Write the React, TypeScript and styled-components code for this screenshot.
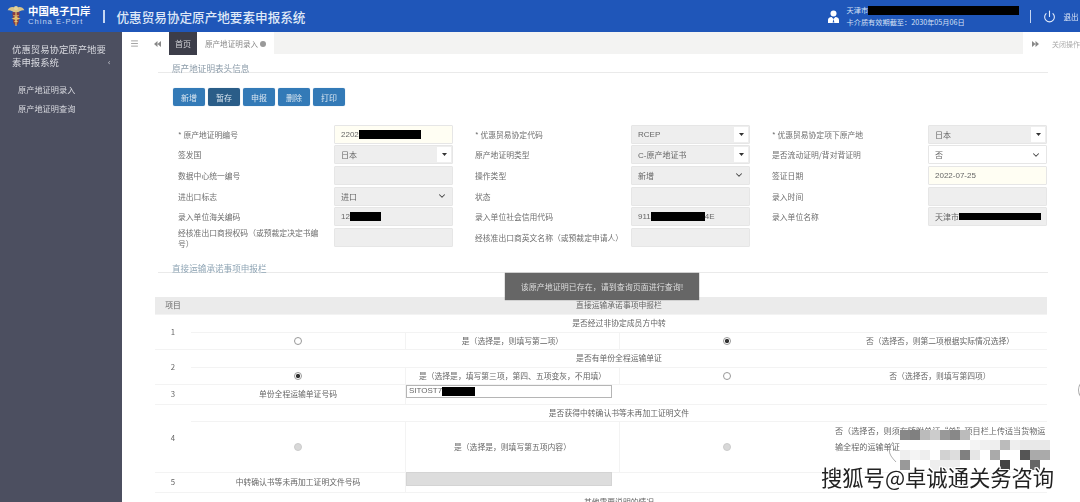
import React from "react";
import styled, { createGlobalStyle } from "styled-components";
import { Menu, Power, ChevronDown } from "lucide-react";

const Global = createGlobalStyle`
  html, body { margin: 0; padding: 0; background: #fff; }
  #root { width: 1080px; height: 502px; overflow: hidden; position: relative; }
  * { box-sizing: border-box; }
`;

const FONT = `"Noto Sans CJK SC", "Liberation Sans", sans-serif`;

const Page = styled.div`
  width: 1080px; height: 502px; overflow: hidden; display: flex; flex-direction: column;
  font-family: ${FONT}; font-size: 8px; color: #666; filter: blur(0.45px);
`;
const Header = styled.header`
  height: 32px; flex: none; background: #1f56b9; display: flex; align-items: center; color: #fff;
`;
const LogoBox = styled.div`width: 28px; flex: none; padding-left: 7px; display: flex; align-items: center;`;
const LogoText = styled.div`width: 75px; flex: none; display: flex; flex-direction: column; line-height: 10px;`;
const LogoCn = styled.div`font-size: 10.4px; font-weight: 700; line-height: 12px;`;
const LogoEn = styled.div`font-family: "Liberation Sans", sans-serif; font-size: 7.6px; letter-spacing: 1px; color: #c5d5f0;`;
const HeaderBar = styled.div`width: 1.5px; height: 13px; flex: none; background: #c5d6f2;`;
const SystemTitle = styled.div`
  font-size: 12.6px; font-weight: 500; color: #dfe8f7; width: 711px; flex: none; margin-left: 12px; white-space: nowrap;
`;
const HeadUser = styled.div`width: 14px; flex: none; display: flex;`;
const UserBlock = styled.div`
  width: 183px; flex: none; display: flex; flex-direction: column; font-size: 7.2px; color: #d4e0f5; line-height: 12px; margin-left: 5px;
`;
const UserLine = styled.div`display: flex; align-items: center; white-space: nowrap;`;
const PowerWrap = styled.div`display: flex; flex: none; margin: 0 8px 0 11.5px; color: #e4ecfa;`;
const Exit = styled.div`font-size: 7.5px; color: #dfe8f7; white-space: nowrap; flex: none;`;
const Redact = styled.span<{ $w: number; $h?: number }>`
  display: inline-block; width: ${(p) => p.$w}px; height: ${(p) => p.$h ?? 9}px; background: #000; flex: none;
  vertical-align: middle;
`;

const Body = styled.div`flex: 1; display: flex; min-height: 0;`;
const Sidebar = styled.aside`
  width: 122px; flex: none; background: #4c4f60; color: #d9dae0; padding: 11px 0 0 12px;
`;
const SideTitleRow = styled.div`display: flex; align-items: flex-end;`;
const SideTitle = styled.div`width: 95px; flex: none; font-size: 9.4px; line-height: 13px;`;
const SideArrow = styled.span`font-size: 8px; margin: 0 0 3px 1px; line-height: 8px;`;
const SideList = styled.div`padding: 14px 0 0 6px; display: flex; flex-direction: column; gap: 6px;`;
const SideItem = styled.div`font-size: 8.2px; line-height: 13px;`;

const Main = styled.main`flex: 1; min-width: 0; display: flex; flex-direction: column; position: relative;`;
const TabBar = styled.div`height: 23px; flex: none; display: flex; align-items: stretch;`;
const TabIcon = styled.div<{ $w: number }>`
  width: ${(p) => p.$w}px; flex: none; display: flex; align-items: center; justify-content: center; color: #888;
`;
const TabActive = styled.div`
  width: 28px; flex: none; background: #3c3d49; color: #d5d5da; font-size: 8px; display: flex; align-items: center; justify-content: center;
`;
const Tab = styled.div`
  width: 77px; flex: none; color: #888; font-size: 7.6px; display: flex; align-items: center; justify-content: center; gap: 2px;
`;
const TabClose = styled.span`width: 6px; height: 6px; border-radius: 50%; background: #999; flex: none;`;
const TabFill = styled.div`width: 749px; flex: none; background: #f3f3f2; margin-bottom: 1px;`;
const TabRight = styled.div`color: #aaa; font-size: 7px; display: flex; align-items: center; white-space: nowrap; padding-left: 9px; gap: 13px;`;
const ArrowSvg = styled.svg<{ $flip?: boolean }>`
  flex: none; ${(p) => p.$flip && "transform: scaleX(-1);"}
`;

const Content = styled.div`padding: 0 32px 0 36px; flex: 1;`;
const SectionTitle = styled.div<{ $h: number; $top: number; $c: string }>`
  height: ${(p) => p.$h}px; padding: ${(p) => p.$top}px 0 0 14px; border-bottom: 1px solid #eaeaea; font-size: 8.6px;
  color: ${(p) => p.$c}; line-height: 10px;
`;
const Toolbar = styled.div`display: flex; gap: 3px; margin: 15px 0 0 15px;`;
const Btn = styled.button<{ $dark?: boolean }>`
  width: 32px; height: 18px; padding: 0; border: none; border-radius: 2px; font: inherit; font-size: 8px;
  color: #dbe7f1; background: ${(p) => (p.$dark ? "#2a5d88" : "#337ab7")}; box-shadow: 0 0 1px #8fb2d0;
`;
const Form = styled.div`
  margin: 18px 0 0 20px; display: grid; grid-template-columns: repeat(3, 297px); grid-auto-rows: 20.6px;
`;
const Field = styled.div`display: grid; grid-template-columns: 156px 119px; align-items: center;`;
const Label = styled.div<{ $nowrap?: boolean }>`
  font-size: 7.8px; color: #6e6e6e; line-height: 11px; padding-right: 12px;
  ${(p) => p.$nowrap && "white-space: nowrap;"}
`;
const tones: Record<string, string> = { gray: "#eee", yellow: "#fffef3", white: "#fff" };
const Control = styled.div<{ $tone: string }>`
  height: 19px; background: ${(p) => tones[p.$tone]}; border: 1px solid #e6e6e6; border-radius: 1px; padding: 0 6px;
  display: flex; align-items: center; font-family: "Liberation Sans", "Noto Sans CJK SC", sans-serif; font-size: 8px; color: #666;
  white-space: nowrap; overflow: hidden;
`;
const CaretBox = styled.span`
  margin: 0 -5px 0 auto; width: 14px; height: 15px; background: #fff; display: flex; align-items: center; justify-content: center;
  flex: none;
`;
const Chevron = styled.span`margin-left: auto; display: flex; color: #444; margin-right: -1px;`;

const Toast = styled.div`
  position: absolute; left: 383px; top: 241px; width: 194px; height: 27px; background: #666; color: #ddd; font-size: 8px;
  display: flex; align-items: center; justify-content: center; box-shadow: 0 0 1px #555;
`;

const Table = styled.div`
  margin: 24px 0 0 -3px; display: grid; grid-template-columns: 36px repeat(4, 214px);
  grid-template-rows: 18px 18px 17px 18px 17px 20px 17px 51px 20px 20px;
`;
const Cell = styled.div<{ $span?: number; $rows?: number; $head?: boolean; $left?: boolean; $line?: boolean }>`
  ${(p) => p.$span && `grid-column: span ${p.$span};`}
  ${(p) => p.$rows && `grid-row: span ${p.$rows};`}
  display: flex; align-items: center; justify-content: ${(p) => (p.$left ? "flex-start" : "center")};
  background: ${(p) => (p.$head ? "#ebebeb" : "#fff")};
  border-bottom: 1px solid #f3f3f3;
  ${(p) => p.$line && "border-left: 1px solid #f3f3f3;"}
  color: #666; font-size: 7.8px; line-height: 16px; white-space: nowrap;
`;
const WrapText = styled.div`white-space: normal; width: 212px; padding-left: 1px; line-height: 16px; font-size: 8.1px; margin-bottom: 15px;`;
const TextInput = styled.div`
  width: 206px; height: 13px; margin-bottom: 6px; border: 1px solid #b5b5b5; background: #fff; font-family: "Liberation Sans", sans-serif;
  font-size: 8px; display: flex; align-items: center; padding-left: 2px; color: #666;
`;
const GrayInput = styled.div`width: 206px; height: 14px; margin-bottom: 6px; background: #ddd; border: 1px solid #d4d4d4;`;
const Radio = styled.input.attrs({ type: "radio", readOnly: true })`
  appearance: none; width: 8px; height: 8px; margin: 0; border-radius: 50%; background: #fff; border: 1px solid #999;
  &:checked { background: radial-gradient(circle, #333 0 45%, #fff 55%); }
  &:disabled { background: #d8d8d8; border-color: #ccc; }
`;

const EdgeArc = styled.div`
  position: absolute; left: 1078px; top: 380px; width: 16px; height: 20px; border: 1px solid #aaa; border-radius: 50%;
`;
const Mosaic = styled.div`
  position: absolute; left: 900px; top: 430px; display: grid; grid-template-columns: repeat(15, 10px); grid-auto-rows: 10px;
  filter: blur(0.3px);
`;
const Pixel = styled.div<{ $c: string }>`background: ${(p) => p.$c};`;
const Callout = styled.svg`position: absolute; left: 885px; top: 440px;`;
const Watermark = styled.div`
  position: absolute; left: 821px; top: 463px; font-family: ${FONT}; font-size: 21.3px; font-weight: 400; line-height: 28px; color: #222;
  white-space: nowrap; text-shadow: 1px 0 0 #fff, -1px 0 0 #fff, 0 1px 0 #fff, 0 -1px 0 #fff, 1px 1px 0 #fff, -1px -1px 0 #fff, 1px -1px 0 #fff, -1px 1px 0 #fff;
`;

const T = "transparent";
const pixels = [
  "#888", "#808080", "#bbb", "#ccc", "#999", "#888", "#bbb", T, T, T, T, T, T, T, T,
  "#fff", "#fff", "#fff", "#fff", "#fff", "#fff", "#fff", "#f4f4f4", "#f0f0f0", "#eee", "#bbb", "#eee", "#e8e8e8", "#e8e8e8", "#e8e8e8",
  "#eee", "#f4f4f4", "#eee", "#fff", "#d2d2d2", "#ddd", "#808080", "#e6e6e6", "#fff", "#aaa", "#fff", "#fff", "#555", "#aaa", "#aaa",
  "#999", "#fff", "#fff", "#eee", "#eee", "#eee", "#fff", "#fff", "#fff", "#fff", "#444", "#fff", "#fff", "#666", "#fff",
];

const LogoIcon = () => (
  <svg width="18" height="24" viewBox="0 0 17 23">
    <path d="M8.5 4 C5 2 2 3 0.5 6 C3 5.5 5 6.5 6.5 8 L10.5 8 C12 6.5 14 5.5 16.5 6 C15 3 12 2 8.5 4Z" fill="#d8c48a" />
    <circle cx="8.5" cy="4" r="2" fill="#e3d39b" />
    <path d="M5 8 H12 L11 18 Q8.5 23 6 18Z" fill="#8a3b3f" />
    <path d="M8.5 6 V21 M6 11 Q11 12 6 14 Q11 15 7 17 M11 11 Q6 12 11 14 Q6 15 10 17" stroke="#e3c56f" strokeWidth="1.1" fill="none" />
  </svg>
);

const UserIcon = () => (
  <svg width="11" height="13" viewBox="0 0 11 13">
    <circle cx="5.5" cy="3.4" r="3" fill="#fff" />
    <path d="M0 13 V10 Q0 7.4 3.6 7 L5.5 9 L7.4 7 Q11 7.4 11 10 V13Z" fill="#fff" />
    <path d="M5.5 9 L4.6 12.6 H6.4Z" fill="#1f56b9" />
  </svg>
);

const DoubleArrow = ({ flip }: { flip?: boolean }) => (
  <ArrowSvg $flip={flip} width="7" height="6" viewBox="0 0 7 6">
    <path d="M3.5 0 V6 L0 3Z M7 0 V6 L3.5 3Z" fill="#888" />
  </ArrowSvg>
);

const Caret = () => (
  <CaretBox>
    <svg width="5" height="3" viewBox="0 0 5 3">
      <path d="M0 0 H5 L2.5 3Z" fill="#333" />
    </svg>
  </CaretBox>
);
const Chev = () => (
  <Chevron>
    <ChevronDown size={10} strokeWidth={2.5} />
  </Chevron>
);

export default function App() {
  return (
    <>
      <Global />
      <Page>
        <Header>
          <LogoBox>
            <LogoIcon />
          </LogoBox>
          <LogoText>
            <LogoCn>中国电子口岸</LogoCn>
            <LogoEn>China E-Port</LogoEn>
          </LogoText>
          <HeaderBar />
          <SystemTitle>优惠贸易协定原产地要素申报系统</SystemTitle>
          <HeadUser>
            <UserIcon />
          </HeadUser>
          <UserBlock>
            <UserLine>
              天津市<Redact $w={151} />
            </UserLine>
            <UserLine>卡介质有效期截至：2030年05月06日</UserLine>
          </UserBlock>
          <HeaderBar />
          <PowerWrap>
            <Power size={13} strokeWidth={2} />
          </PowerWrap>
          <Exit>退出</Exit>
        </Header>
        <Body>
          <Sidebar>
            <SideTitleRow>
              <SideTitle>优惠贸易协定原产地要素申报系统</SideTitle>
              <SideArrow>‹</SideArrow>
            </SideTitleRow>
            <SideList>
              <SideItem>原产地证明录入</SideItem>
              <SideItem>原产地证明查询</SideItem>
            </SideList>
          </Sidebar>
          <Main>
            <TabBar>
              <TabIcon $w={24}>
                <Menu size={9} />
              </TabIcon>
              <TabIcon $w={23}>
                <DoubleArrow />
              </TabIcon>
              <TabActive>首页</TabActive>
              <Tab>
                原产地证明录入<TabClose />
              </Tab>
              <TabFill />
              <TabRight>
                <DoubleArrow flip />
                <span>关闭操作</span>
              </TabRight>
            </TabBar>
            <Content>
              <SectionTitle $h={18} $top={8} $c="#8a9aa8">
                原产地证明表头信息
              </SectionTitle>
              <Toolbar>
                <Btn>新增</Btn>
                <Btn $dark>暂存</Btn>
                <Btn>申报</Btn>
                <Btn>删除</Btn>
                <Btn>打印</Btn>
              </Toolbar>
              <Form>
                <Field>
                  <Label>* 原产地证明编号</Label>
                  <Control $tone="yellow">
                    2202<Redact $w={62} />
                  </Control>
                </Field>
                <Field>
                  <Label>* 优惠贸易协定代码</Label>
                  <Control $tone="gray">
                    RCEP
                    <Caret />
                  </Control>
                </Field>
                <Field>
                  <Label>* 优惠贸易协定项下原产地</Label>
                  <Control $tone="gray">
                    日本
                    <Caret />
                  </Control>
                </Field>

                <Field>
                  <Label>签发国</Label>
                  <Control $tone="gray">
                    日本
                    <Caret />
                  </Control>
                </Field>
                <Field>
                  <Label>原产地证明类型</Label>
                  <Control $tone="gray">
                    C-原产地证书
                    <Caret />
                  </Control>
                </Field>
                <Field>
                  <Label>是否流动证明/背对背证明</Label>
                  <Control $tone="white">
                    否
                    <Chev />
                  </Control>
                </Field>

                <Field>
                  <Label>数据中心统一编号</Label>
                  <Control $tone="gray" />
                </Field>
                <Field>
                  <Label>操作类型</Label>
                  <Control $tone="gray">
                    新增
                    <Chev />
                  </Control>
                </Field>
                <Field>
                  <Label>签证日期</Label>
                  <Control $tone="yellow">2022-07-25</Control>
                </Field>

                <Field>
                  <Label>进出口标志</Label>
                  <Control $tone="gray">
                    进口
                    <Chev />
                  </Control>
                </Field>
                <Field>
                  <Label>状态</Label>
                  <Control $tone="gray" />
                </Field>
                <Field>
                  <Label>录入时间</Label>
                  <Control $tone="gray" />
                </Field>

                <Field>
                  <Label>录入单位海关编码</Label>
                  <Control $tone="gray">
                    12
                    <Redact $w={31} />
                  </Control>
                </Field>
                <Field>
                  <Label>录入单位社会信用代码</Label>
                  <Control $tone="gray">
                    911
                    <Redact $w={54} />
                    4E
                  </Control>
                </Field>
                <Field>
                  <Label>录入单位名称</Label>
                  <Control $tone="gray">
                    天津市
                    <Redact $w={82} $h={7} />
                  </Control>
                </Field>

                <Field>
                  <Label>经核准出口商授权码（或预裁定决定书编号）</Label>
                  <Control $tone="gray" />
                </Field>
                <Field>
                  <Label $nowrap>经核准出口商英文名称（或预裁定申请人）</Label>
                  <Control $tone="gray" />
                </Field>
              </Form>
              <SectionTitle $h={25} $top={15} $c="#8fa5b5">
                直接运输承诺事项申报栏
              </SectionTitle>
              <Table>
                <Cell $head>项目</Cell>
                <Cell $head $span={4}>
                  直接运输承诺事项申报栏
                </Cell>

                <Cell $rows={2}>1</Cell>
                <Cell $span={4}>是否经过非协定成员方中转</Cell>
                <Cell>
                  <Radio />
                </Cell>
                <Cell $line>是（选择是，则填写第二项）</Cell>
                <Cell $line>
                  <Radio defaultChecked />
                </Cell>
                <Cell>否（选择否，则第二项根据实际情况选择）</Cell>

                <Cell $rows={2}>2</Cell>
                <Cell $span={4}>是否有单份全程运输单证</Cell>
                <Cell>
                  <Radio defaultChecked />
                </Cell>
                <Cell $line>是（选择是，填写第三项，第四、五项变灰，不用填）</Cell>
                <Cell $line>
                  <Radio />
                </Cell>
                <Cell>否（选择否，则填写第四项）</Cell>

                <Cell>3</Cell>
                <Cell>单份全程运输单证号码</Cell>
                <Cell $left $line>
                  <TextInput>
                    SITOST7
                    <Redact $w={33} />
                  </TextInput>
                </Cell>
                <Cell $span={2} />

                <Cell $rows={2}>4</Cell>
                <Cell $span={4}>是否获得中转确认书等未再加工证明文件</Cell>
                <Cell>
                  <Radio disabled />
                </Cell>
                <Cell $line>是（选择是，则填写第五项内容）</Cell>
                <Cell $line>
                  <Radio disabled />
                </Cell>
                <Cell>
                  <WrapText>否（选择否，则须在随附单证“单”项目栏上传适当货物运输全程的运输单证）</WrapText>
                </Cell>

                <Cell>5</Cell>
                <Cell>中转确认书等未再加工证明文件号码</Cell>
                <Cell $left $line>
                  <GrayInput />
                </Cell>
                <Cell $span={2} />

                <Cell />
                <Cell $span={4}>其他需要说明的情况</Cell>
              </Table>
            </Content>
            <Toast>该原产地证明已存在，请到查询页面进行查询!</Toast>
          </Main>
        </Body>
      </Page>
      <EdgeArc />
      <Mosaic>
        {pixels.map((c, i) => (
          <Pixel key={i} $c={c} />
        ))}
      </Mosaic>
      <Callout width="15" height="24" viewBox="0 0 15 24">
        <path d="M8 2 Q2 10 6 16 Q8 19 11 22" stroke="#999" strokeWidth="0.8" fill="none" />
      </Callout>
      <Watermark>搜狐号@卓诚通关务咨询</Watermark>
    </>
  );
}
